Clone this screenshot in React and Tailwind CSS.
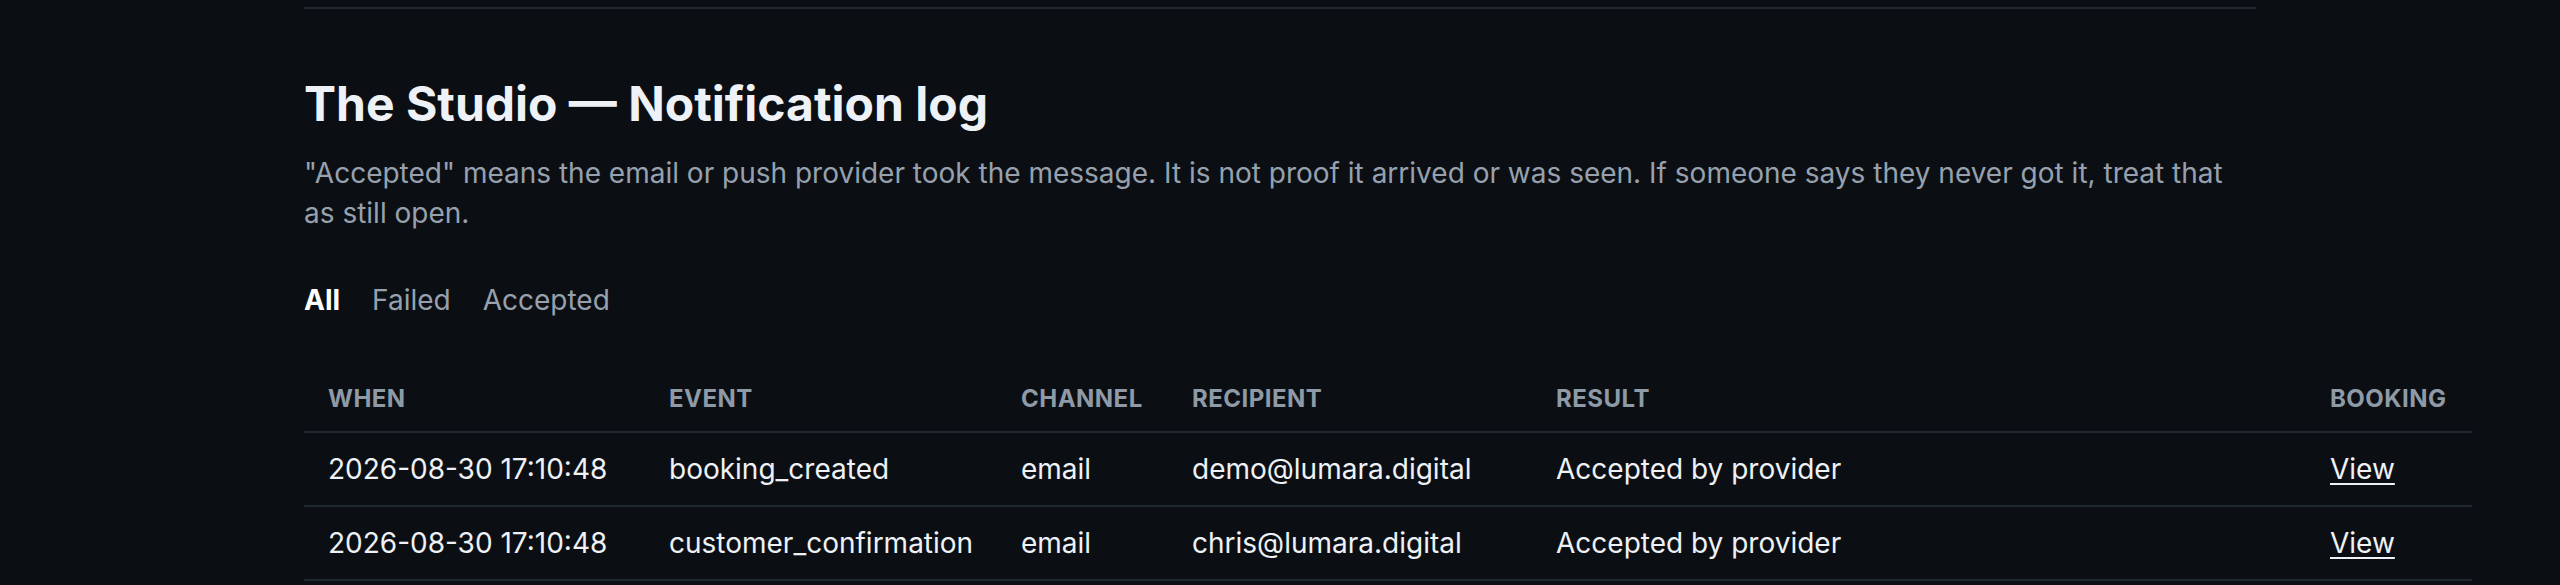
import React, { useState } from 'react';

const rows = [
  {
    id: 1,
    when: '2026-08-30 17:10:48',
    event: 'booking_created',
    channel: 'email',
    recipient: 'demo@lumara.digital',
    result: 'Accepted by provider',
  },
  {
    id: 2,
    when: '2026-08-30 17:10:48',
    event: 'customer_confirmation',
    channel: 'email',
    recipient: 'chris@lumara.digital',
    result: 'Accepted by provider',
  },
];

const tabs = ['All', 'Failed', 'Accepted'];

const columns = [
  { key: 'when', label: 'When', width: 'w-[341px]' },
  { key: 'event', label: 'Event', width: 'w-[352px]' },
  { key: 'channel', label: 'Channel', width: 'w-[171px]' },
  { key: 'recipient', label: 'Recipient', width: 'w-[364px]' },
  { key: 'result', label: 'Result', width: 'w-[774px]' },
  { key: 'booking', label: 'Booking', width: 'w-[166px]' },
];

const App = () => {
  const [activeTab, setActiveTab] = useState('All');

  return (
    <div className="min-h-screen bg-[#0b0f14] font-['Inter',sans-serif] text-[#eef1f5]">
      <div className="mx-auto w-[1952px] pt-[7px]">
        <div className="h-[2px] bg-[#20282f]" />

        <h1 className="mt-[66px] text-[48px] font-bold leading-[1.2] text-[#eef2f6]">
          The Studio — Notification log
        </h1>
        <p className="mt-[20px] text-[28px] leading-[40px] text-[#97a1ae]">
          "Accepted" means the email or push provider took the message. It is not proof it arrived or was seen. If
          someone says they never got it, treat that as still open.
        </p>

        {/* filter tabs */}
        <div className="mt-[47px] flex gap-8 text-[28px] leading-[40px]">
          {tabs.map(tab => (
            <button
              key={tab}
              onClick={() => setActiveTab(tab)}
              className={activeTab === tab ? 'font-bold text-white' : 'text-[#97a1ae]'}
            >
              {tab}
            </button>
          ))}
        </div>

        <table className="mt-[46px] w-[2168px] table-fixed border-collapse">
          <thead>
            <tr className="border-b-2 border-[#20282f]">
              {columns.map(col => (
                <th
                  key={col.key}
                  className={`${col.width} px-6 py-4 text-left text-[24px] font-bold uppercase leading-[33px] tracking-[0.02em] text-[#8f9aa7]`}
                >
                  {col.label}
                </th>
              ))}
            </tr>
          </thead>
          <tbody>
            {rows.map(row => (
              <tr key={row.id} className="border-b-2 border-[#20282f] text-[28px] leading-[40px]">
                <td className="px-6 py-4">{row.when}</td>
                <td className="px-6 py-4">{row.event}</td>
                <td className="px-6 py-4">{row.channel}</td>
                <td className="px-6 py-4">{row.recipient}</td>
                <td className="px-6 py-4">{row.result}</td>
                <td className="px-6 py-4">
                  <a href="#" className="underline underline-offset-4">
                    View
                  </a>
                </td>
              </tr>
            ))}
          </tbody>
        </table>
      </div>
    </div>
  );
};

export default App;
